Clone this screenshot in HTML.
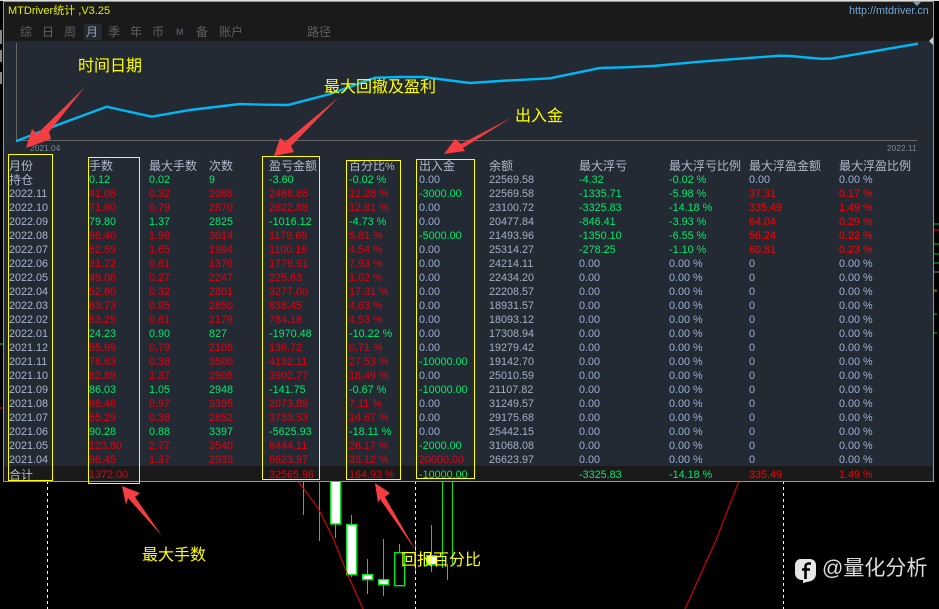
<!DOCTYPE html>
<html lang="zh"><head><meta charset="utf-8"><title>MTDriver统计</title>
<style>
html,body{margin:0;padding:0;background:#000}
#s{position:relative;width:939px;height:609px;overflow:hidden;background:#000;font-family:"Liberation Sans","Noto Sans CJK SC",sans-serif;font-size:10.8px;color:#9ab0d4}
#s>*{position:absolute}
#panel{left:3px;top:1px;width:929px;height:479px;background:#242a33;border:1px solid #8a96ae}
#top{left:4px;top:2px;width:929px;height:39px;background:#1a1a1a}
#tot{left:4px;top:466px;width:928px;height:15px;background:#1a1a1a}
.tab{top:25px;font-size:12px;line-height:15px;color:#5c6165;white-space:nowrap}
.r{left:0;width:939px;height:14px;line-height:14px;white-space:nowrap}
.r i{position:absolute;top:0;font-style:normal}
.r i:nth-child(1){left:9px}.r i:nth-child(2){left:89px}.r i:nth-child(3){left:149px}.r i:nth-child(4){left:209px}
.r i:nth-child(5){left:269px}.r i:nth-child(6){left:349px}.r i:nth-child(7){left:419px}.r i:nth-child(8){left:489px}
.r i:nth-child(9){left:579px}.r i:nth-child(10){left:669px}.r i:nth-child(11){left:749px}.r i:nth-child(12){left:839px}
.r i:nth-child(8){color:#a2b0c4}.r i:nth-child(1){color:#a8b6ce}
.h{font-size:12px;color:#b0bacb}.h i:nth-child(1),.h i:nth-child(8){color:#b0bacb}
.r i.g{color:#00ea6c}.r i.d{color:#e4000f}.r i.b{color:#ff0000}
.y{border:1px solid #ffff00;box-sizing:border-box}
.a{font-size:16px;line-height:20px;color:#ffff00;white-space:nowrap}
svg{left:0;top:0}
</style></head><body><div id="s">

<svg width="939" height="609" viewBox="0 0 939 609">
<g stroke="#00e81c" stroke-width="1" fill="none">
<path d="M303.5 481V515M319.5 481V541M335.5 481V538M351.5 515V577M367.5 559V594M383.5 539V596M399.5 544V552M415.5 539V573M431.5 525V572M442.5 481V568M447.5 564V580M452.5 481V564"/>
</g>
<g fill="#fff" stroke="#00e81c" stroke-width="1.4">
<rect x="330.7" y="480" width="10" height="44"/>
<rect x="346.7" y="524.7" width="10" height="50"/>
<rect x="362.7" y="574.7" width="10" height="5"/>
<rect x="378.7" y="579.7" width="10" height="5"/>
<rect x="394.7" y="552.7" width="10" height="33" fill="none"/>
<rect x="426.7" y="555.7" width="10" height="9"/>
</g>
<path d="M298 481L318 508L333 538L347 573L363 609M739 481L716 540L685 609" stroke="#f00000" stroke-width="1" fill="none"/>
<path d="M47.5 481V609M415.5 481V609M783.5 481V609" stroke="#fff" stroke-width="1" stroke-dasharray="3 3" fill="none"/>
<path d="M0 408H3" stroke="#f00000"/><path d="M0 344H3" stroke="#00e81c"/>
<path d="M0 30h2v14H0zM0 50h2v12H0zM0 72h2v12H0z" fill="#888"/>
<path d="M934 224h5M934 244h5M934 254h5M934 263h5M934 291h3M934 314h3M934 333h3" stroke="#00c81c"/>
<path d="M934 230h5M934 290h3" stroke="#f00000"/><path d="M934 272h5" stroke="#888"/>
</svg>

<div id="panel"></div>
<div id="top"></div>
<div id="tot"></div>
<div style="left:0;top:0;width:939px;height:1px;background:#ddd"></div>

<div style="left:84px;top:24px;width:18px;height:16px;background:#242a33;border-radius:2px"></div>
<div style="left:8px;top:4px;font-size:11px;line-height:15px;color:#e8f000;white-space:nowrap">MTDriver统计 ,V3.25</div>
<div style="left:849px;top:4px;font-size:10.8px;line-height:15px;color:#6fa8d8;white-space:nowrap">http://mtdriver.cn</div>
<div class="tab" style="left:20px">综</div><div class="tab" style="left:42px">日</div><div class="tab" style="left:64px">周</div>
<div class="tab" style="left:86px;color:#98a2b0">月</div><div class="tab" style="left:108px">季</div><div class="tab" style="left:130px">年</div>
<div class="tab" style="left:152px">币</div><div class="tab" style="left:176px;font-size:9px;font-weight:bold;color:#4a5664">M</div>
<div class="tab" style="left:196px">备</div><div class="tab" style="left:219px">账户</div><div class="tab" style="left:307px">路径</div>

<svg width="939" height="609" viewBox="0 0 939 609">
<path d="M16.5 43V140.5H917" stroke="#666" stroke-width="1" fill="none"/>
<polygon points="912,1 922,1 917,6" fill="#8a96ae"/>
<polygon points="933,37 933,45 929,41" fill="#c8ccd4"/>
<polyline fill="none" stroke="#00b8f5" stroke-width="2.4" points="16,141.3 60,124 106.7,106.7 151.7,116.7 190,110 240,104 263,104.7 288,105 330,94 375,77.7 400,77 423,77 470,83 500,81 550,78.3 600,68 625,67.3 653,66 700,61.7 753,57.7 780,55.7 790,56 820,58.7 830,58.7 918,43.7"/>
</svg>
<div style="left:30px;top:142px;font-size:8.4px;line-height:12px;color:#7a8494">2021.04</div>
<div style="left:887px;top:142px;font-size:8.4px;line-height:12px;color:#7a8494">2022.11</div>

<div class="r h" style="top:159px"><i>月份</i><i>手数</i><i>最大手数</i><i>次数</i><i>盈亏金额</i><i>百分比<span style="font-size:10.8px">%</span></i><i>出入金</i><i>余额</i><i>最大浮亏</i><i>最大浮亏比例</i><i>最大浮盈金额</i><i>最大浮盈比例</i></div>
<div class="r" style="top:173px"><i class="h" style="font-size:12px">持仓</i><i class="g">0.12</i><i class="g">0.02</i><i class="g">9</i><i class="g">-3.60</i><i class="g">-0.02 %</i><i>0.00</i><i>22569.58</i><i class="g">-4.32</i><i class="g">-0.02 %</i><i>0.00</i><i>0.00 %</i></div>
<div class="r" style="top:187px"><i>2022.11</i><i class="d">41.08</i><i class="d">0.32</i><i class="d">2088</i><i class="d">2468.86</i><i class="d">12.28 %</i><i class="g">-3000.00</i><i>22569.58</i><i class="g">-1335.71</i><i class="g">-5.98 %</i><i class="b">37.31</i><i class="b">0.17 %</i></div>
<div class="r" style="top:201px"><i>2022.10</i><i class="d">71.60</i><i class="d">0.79</i><i class="d">2870</i><i class="d">2622.88</i><i class="d">12.81 %</i><i>0.00</i><i>23100.72</i><i class="g">-3325.83</i><i class="g">-14.18 %</i><i class="b">335.49</i><i class="b">1.49 %</i></div>
<div class="r" style="top:215px"><i>2022.09</i><i class="g">79.80</i><i class="g">1.37</i><i class="g">2825</i><i class="g">-1016.12</i><i class="g">-4.73 %</i><i>0.00</i><i>20477.84</i><i class="g">-846.41</i><i class="g">-3.93 %</i><i class="b">64.04</i><i class="b">0.29 %</i></div>
<div class="r" style="top:229px"><i>2022.08</i><i class="d">98.40</i><i class="d">1.98</i><i class="d">3014</i><i class="d">1179.69</i><i class="d">5.81 %</i><i class="g">-5000.00</i><i>21493.96</i><i class="g">-1350.10</i><i class="g">-6.55 %</i><i class="b">56.24</i><i class="b">0.22 %</i></div>
<div class="r" style="top:243px"><i>2022.07</i><i class="d">52.59</i><i class="d">1.65</i><i class="d">1994</i><i class="d">1100.16</i><i class="d">4.54 %</i><i>0.00</i><i>25314.27</i><i class="g">-278.25</i><i class="g">-1.10 %</i><i class="b">60.81</i><i class="b">0.23 %</i></div>
<div class="r" style="top:257px"><i>2022.06</i><i class="d">31.72</i><i class="d">0.61</i><i class="d">1376</i><i class="d">1779.91</i><i class="d">7.93 %</i><i>0.00</i><i>24214.11</i><i>0.00</i><i>0.00 %</i><i>0</i><i>0.00 %</i></div>
<div class="r" style="top:271px"><i>2022.05</i><i class="d">49.06</i><i class="d">0.27</i><i class="d">2247</i><i class="d">225.63</i><i class="d">1.02 %</i><i>0.00</i><i>22434.20</i><i>0.00</i><i>0.00 %</i><i>0</i><i>0.00 %</i></div>
<div class="r" style="top:285px"><i>2022.04</i><i class="d">52.60</i><i class="d">0.32</i><i class="d">2801</i><i class="d">3277.00</i><i class="d">17.31 %</i><i>0.00</i><i>22208.57</i><i>0.00</i><i>0.00 %</i><i>0</i><i>0.00 %</i></div>
<div class="r" style="top:299px"><i>2022.03</i><i class="d">63.73</i><i class="d">0.95</i><i class="d">2850</i><i class="d">838.45</i><i class="d">4.63 %</i><i>0.00</i><i>18931.57</i><i>0.00</i><i>0.00 %</i><i>0</i><i>0.00 %</i></div>
<div class="r" style="top:313px"><i>2022.02</i><i class="d">53.25</i><i class="d">0.61</i><i class="d">2179</i><i class="d">784.18</i><i class="d">4.53 %</i><i>0.00</i><i>18093.12</i><i>0.00</i><i>0.00 %</i><i>0</i><i>0.00 %</i></div>
<div class="r" style="top:327px"><i>2022.01</i><i class="g">24.23</i><i class="g">0.90</i><i class="g">827</i><i class="g">-1970.48</i><i class="g">-10.22 %</i><i>0.00</i><i>17308.94</i><i>0.00</i><i>0.00 %</i><i>0</i><i>0.00 %</i></div>
<div class="r" style="top:341px"><i>2021.12</i><i class="d">55.99</i><i class="d">0.79</i><i class="d">2108</i><i class="d">136.72</i><i class="d">0.71 %</i><i>0.00</i><i>19279.42</i><i>0.00</i><i>0.00 %</i><i>0</i><i>0.00 %</i></div>
<div class="r" style="top:355px"><i>2021.11</i><i class="d">76.63</i><i class="d">0.38</i><i class="d">3500</i><i class="d">4132.11</i><i class="d">27.53 %</i><i class="g">-10000.00</i><i>19142.70</i><i>0.00</i><i>0.00 %</i><i>0</i><i>0.00 %</i></div>
<div class="r" style="top:369px"><i>2021.10</i><i class="d">82.89</i><i class="d">1.37</i><i class="d">2905</i><i class="d">3902.77</i><i class="d">18.49 %</i><i>0.00</i><i>25010.59</i><i>0.00</i><i>0.00 %</i><i>0</i><i>0.00 %</i></div>
<div class="r" style="top:383px"><i>2021.09</i><i class="g">86.03</i><i class="g">1.05</i><i class="g">2948</i><i class="g">-141.75</i><i class="g">-0.67 %</i><i class="g">-10000.00</i><i>21107.82</i><i>0.00</i><i>0.00 %</i><i>0</i><i>0.00 %</i></div>
<div class="r" style="top:397px"><i>2021.08</i><i class="d">86.46</i><i class="d">0.97</i><i class="d">3395</i><i class="d">2073.89</i><i class="d">7.11 %</i><i>0.00</i><i>31249.57</i><i>0.00</i><i>0.00 %</i><i>0</i><i>0.00 %</i></div>
<div class="r" style="top:411px"><i>2021.07</i><i class="d">55.29</i><i class="d">0.38</i><i class="d">2852</i><i class="d">3733.53</i><i class="d">14.67 %</i><i>0.00</i><i>29175.68</i><i>0.00</i><i>0.00 %</i><i>0</i><i>0.00 %</i></div>
<div class="r" style="top:425px"><i>2021.06</i><i class="g">90.28</i><i class="g">0.88</i><i class="g">3397</i><i class="g">-5625.93</i><i class="g">-18.11 %</i><i>0.00</i><i>25442.15</i><i>0.00</i><i>0.00 %</i><i>0</i><i>0.00 %</i></div>
<div class="r" style="top:439px"><i>2021.05</i><i class="d">123.80</i><i class="d">2.77</i><i class="d">3540</i><i class="d">6444.11</i><i class="d">26.17 %</i><i class="g">-2000.00</i><i>31068.08</i><i>0.00</i><i>0.00 %</i><i>0</i><i>0.00 %</i></div>
<div class="r" style="top:453px"><i>2021.04</i><i class="d">96.45</i><i class="d">1.37</i><i class="d">2933</i><i class="d">6623.97</i><i class="d">33.12 %</i><i class="d">20000.00</i><i>26623.97</i><i>0.00</i><i>0.00 %</i><i>0</i><i>0.00 %</i></div>
<div class="r" style="top:468px"><i style="font-size:12px;color:#b0bacb">合计</i><i class="d">1372.00</i><i></i><i></i><i class="d">32565.98</i><i class="d">164.93 %</i><i class="g">-10000.00</i><i></i><i class="g">-3325.83</i><i class="g">-14.18 %</i><i class="b">335.49</i><i class="b">1.49 %</i></div>

<div class="y" style="left:8px;top:154px;width:45px;height:327px"></div>
<div class="y" style="left:88px;top:157px;width:52px;height:327px"></div>
<div class="y" style="left:262px;top:156px;width:58px;height:324px"></div>
<div class="y" style="left:346px;top:160px;width:55px;height:320px"></div>
<div class="y" style="left:416px;top:159px;width:59px;height:320px"></div>

<svg width="939" height="609" viewBox="0 0 939 609">
<g fill="#f63e42">
<polygon points="85,87 49,132 51,139 26,148 32,129 37,134"/>
<polygon points="339,97 291,146 294,152 274,156 280,138 285,142"/>
<polygon points="511,118 461,144 455,139 444,154 465,151 463,148"/>
<polygon points="122,486 140,493 135,497 162,536 128,498 126,505"/>
<polygon points="375,483 390,493 385,497 416,551 380,499 378,503"/>
</g>
</svg>

<div class="a" style="left:78px;top:57px">时间日期</div>
<div class="a" style="left:324px;top:78px">最大回撤及盈利</div>
<div class="a" style="left:515px;top:107px">出入金</div>
<div class="a" style="left:142px;top:546px">最大手数</div>
<div class="a" style="left:401px;top:551px">回报百分比</div>

<svg width="939" height="609" viewBox="0 0 939 609">
<path d="M802 559h8a6 6 0 0 1 6 6v9c0 3-2 6-5 7l-8 2v-3h-1a7 7 0 0 1-7-6v-9a6 6 0 0 1 7-6z" fill="#e6e6e6"/>
<path d="M811 563.5h-2.5a3 3 0 0 0-3 3V579M802 569.5h8" stroke="#000" stroke-width="2.6" fill="none"/>
</svg>
<div style="left:822px;top:556px;font-size:21px;line-height:26px;color:#dcdcdc;white-space:nowrap">@量化分析</div>

</div></body></html>
